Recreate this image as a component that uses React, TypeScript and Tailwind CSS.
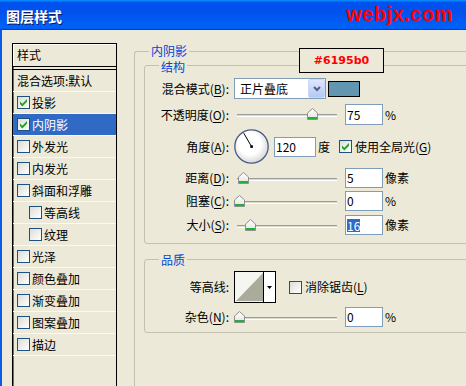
import React from "react";

function Check({ checked }: { checked?: boolean }) {
  return (
    <span className="flex w-[13px] h-[13px] shrink-0 items-center justify-center border border-[#1C5180] bg-linear-to-br from-[#DCDCD7] to-white">
      {checked ? (
        <svg width="11" height="11" viewBox="0 0 11 11" className="block">
          <path d="M2 4.4 L4.3 6.7 L9 2 V4.7 L4.3 9.4 L2 7.1 Z" fill="#21A121" />
        </svg>
      ) : null}
    </span>
  );
}

function Legend({ text, up }: { text: string; up: "6" | "7" | "8" }) {
  const mt = up === "6" ? "-mt-[6px]" : up === "8" ? "-mt-[8px]" : "-mt-[7px]";
  return (
    <div className={mt + " ml-[14px] w-fit px-[2px] bg-[#ECE9D8] text-[#0046D5] text-[12px] leading-[13px]"}>
      {text}
    </div>
  );
}

function Thumb() {
  return (
    <svg width="11" height="12" viewBox="0 0 11 12" className="block">
      <defs>
        <linearGradient id="thumbg" x1="0" y1="0" x2="0" y2="1">
          <stop offset="0" stopColor="#FFFFFF" />
          <stop offset="1" stopColor="#E3E3DC" />
        </linearGradient>
      </defs>
      <path d="M5.5 0.5 L10.5 5 V11.5 H0.5 V5 Z" fill="url(#thumbg)" stroke="#8E8F8F" />
      <rect x="1" y="9" width="9" height="2" fill="#21B03A" />
    </svg>
  );
}

function Slider({ x }: { x: number }) {
  return (
    <div className="relative w-[111px] h-full shrink-0">
      <div className="ml-[3px] mt-[10px] w-[100px] h-[3px] border-t border-[#9D9C99] bg-[#DAD9D0] border-b border-b-white" />
      <div className="absolute top-[4px]" style={{ left: x }}>
        <Thumb />
      </div>
    </div>
  );
}

function NumBox({ children, w = 38 }: { children: React.ReactNode; w?: number }) {
  return (
    <div
      className="h-full shrink-0 flex items-center border border-[#7F9DB9] bg-white pl-[1px]"
      style={{ width: w }}
    >
      {children}
    </div>
  );
}

function Label({ children }: { children: React.ReactNode }) {
  return <div className="w-[84px] mr-[5px] shrink-0 text-right whitespace-nowrap">{children}</div>;
}

const items: { label: string; checked?: boolean; active?: boolean; sub?: boolean }[] = [
  { label: "投影", checked: true },
  { label: "内阴影", checked: true, active: true },
  { label: "外发光" },
  { label: "内发光" },
  { label: "斜面和浮雕" },
  { label: "等高线", sub: true },
  { label: "纹理", sub: true },
  { label: "光泽" },
  { label: "颜色叠加" },
  { label: "渐变叠加" },
  { label: "图案叠加" },
  { label: "描边" },
];

export default function App() {
  return (
    <div className="relative w-[466px] h-[386px] overflow-hidden bg-[#ECE9D8] text-[12px] leading-[14px] text-black font-['Noto_Sans_CJK_SC','Liberation_Sans',sans-serif]">
      {/* Title bar */}
      <div className="h-[30px] flex items-center justify-between pl-[6px] pr-[13px] bg-[linear-gradient(180deg,#0997ff,#0053ee_8%,#0050ee_40%,#0062f5_88%,#0062f5_93%,#005bff_95%,#003dd7_96%,#003dd7)]">
        <div className="mt-[1px] text-white font-bold text-[14px] leading-[16px] [text-shadow:1px_1px_0_#0a1a6a]">
          图层样式
        </div>
        <div className="-mt-[2px] font-['Liberation_Sans',Arial,sans-serif] font-bold text-[20px] leading-[20px] tracking-[0.5px] text-[#FF0000]">
          webjx.com
        </div>
      </div>

      {/* Body */}
      <div className="flex items-start h-[356px] border-l-2 border-[#0A5AE8]">
        {/* Left list */}
        <div className="ml-[10px] mt-[13px] w-[105px] h-[400px] shrink-0 border border-black shadow-[inset_1px_0_0_#6f6f6f]">
          <div className="h-[23px] flex items-center pl-[4px] border-b border-black shadow-[inset_1px_1px_0_#ffffff]">
            样式
          </div>
          <div className="h-[3px] border-b border-black" />
          <div className="h-[22px] flex items-center pl-[4px] border-b border-[#FAFAF4]">混合选项:默认</div>
          {items.map((it) => (
            <div
              key={it.label}
              className={
                (it.active ? "bg-[#316AC5] text-white " : "") +
                (it.sub ? "pl-[16px] " : "pl-[4px] ") +
                "h-[22px] flex items-center gap-[2px] border-b border-[#FAFAF4]"
              }
            >
              <Check checked={it.checked} />
              <span>{it.label}</span>
            </div>
          ))}
        </div>

        {/* Right side */}
        <div className="ml-[17px] mt-[21px] w-[345px] h-[400px] shrink-0 border-l border-t border-[#C2C1B0] rounded-tl-[3px]">
          <Legend text="内阴影" up="8" />

          {/* 结构 */}
          <div className="ml-[9px] mt-[8px] w-[335px] border border-[#C2C1B0] rounded-[3px] pb-[8px]">
            <Legend text="结构" up="6" />

            <div className="flex items-center h-[21px] mt-[5px]">
              <Label>
                混合模式(<u className="underline-offset-2">B</u>):
              </Label>
              <div className="w-[92px] h-full shrink-0 flex items-center border border-[#7F9DB9] bg-white">
                <span className="flex-1 pl-[5px]">正片叠底</span>
                <div className="w-[17px] h-[19px] flex items-center justify-center rounded-[2px] border border-[#C9D8FC] bg-linear-to-b from-[#DDE6FC] to-[#B5C8F5]">
                  <svg width="8" height="6" viewBox="0 0 8 6" className="block">
                    <path d="M1 1 L4 4 L7 1" fill="none" stroke="#4D6185" strokeWidth="2" />
                  </svg>
                </div>
              </div>
              <div className="ml-[2px] w-[32px] h-[16px] border border-black bg-[#6195b0]" />
            </div>

            <div className="flex items-center h-[21px] mt-[5px]">
              <Label>
                不透明度(<u className="underline-offset-2">O</u>):
              </Label>
              <Slider x={73} />
              <NumBox>75</NumBox>
              <span className="ml-[2px]">%</span>
            </div>

            <div className="flex items-center h-[35px] mt-[4px]">
              <Label>
                角度(<u className="underline-offset-2">A</u>):
              </Label>
              <svg width="35" height="35" viewBox="0 0 35 35" className="block shrink-0">
                <defs>
                  <radialGradient id="dialg" cx="0.45" cy="0.42" r="0.6">
                    <stop offset="0.55" stopColor="#ffffff" />
                    <stop offset="1" stopColor="#d4d4d4" />
                  </radialGradient>
                </defs>
                <circle cx="17.5" cy="17.5" r="16.7" fill="url(#dialg)" stroke="#4A5B86" strokeWidth="1.3" />
                <line x1="17.5" y1="17.5" x2="9.8" y2="4.2" stroke="#000" strokeWidth="1" />
                <rect x="16.3" y="16.3" width="2.6" height="2.6" fill="#000" />
              </svg>
              <div className="ml-[5px] h-[20px] flex">
                <NumBox w={42}>120</NumBox>
              </div>
              <span className="ml-[2px]">度</span>
              <span className="ml-[9px]">
                <Check checked />
              </span>
              <span className="ml-[3px] whitespace-nowrap">
                使用全局光(<u className="underline-offset-2">G</u>)
              </span>
            </div>

            <div className="flex items-center h-[20px] mt-[4px]">
              <Label>
                距离(<u className="underline-offset-2">D</u>):
              </Label>
              <Slider x={4} />
              <NumBox>5</NumBox>
              <span className="ml-[2px]">像素</span>
            </div>

            <div className="flex items-center h-[20px] mt-[3px]">
              <Label>
                阻塞(<u className="underline-offset-2">C</u>):
              </Label>
              <Slider x={0} />
              <NumBox>0</NumBox>
              <span className="ml-[2px]">%</span>
            </div>

            <div className="flex items-center h-[20px] mt-[4px]">
              <Label>
                大小(<u className="underline-offset-2">S</u>):
              </Label>
              <Slider x={11} />
              <NumBox>
                <span className="bg-[#316AC5] text-white leading-[13px]">16</span>
              </NumBox>
              <span className="ml-[2px]">像素</span>
            </div>
          </div>

          {/* 品质 */}
          <div className="ml-[9px] mt-[15px] w-[335px] border border-[#C2C1B0] rounded-[3px] pb-[5px]">
            <Legend text="品质" up="7" />

            <div className="flex items-center h-[32px] mt-[5px]">
              <Label>等高线:</Label>
              <div className="flex w-[42px] h-full shrink-0 border border-black bg-white">
                <div className="w-[29px] h-full border-r border-black p-[1px] bg-[#F6F6F0]">
                  <svg width="27" height="28" viewBox="0 0 27 28" className="block">
                    <polygon points="0,28 27,0 27,28" fill="#ABAB9C" />
                  </svg>
                </div>
                <div className="flex-1 flex items-center justify-center">
                  <svg width="5" height="3" viewBox="0 0 5 3" className="block">
                    <polygon points="0,0 5,0 2.5,3" fill="#000" />
                  </svg>
                </div>
              </div>
              <span className="ml-[13px]">
                <Check />
              </span>
              <span className="ml-[3px] whitespace-nowrap">
                消除锯齿(<u className="underline-offset-2">L</u>)
              </span>
            </div>

            <div className="flex items-center h-[20px] mt-[4px]">
              <Label>
                杂色(<u className="underline-offset-2">N</u>):
              </Label>
              <Slider x={0} />
              <NumBox>0</NumBox>
              <span className="ml-[2px]">%</span>
            </div>
          </div>
        </div>
      </div>

      {/* annotation box */}
      <div className="absolute left-[299px] top-[48px] w-[85px] h-[25px] flex items-center justify-center border border-black bg-[#ECE9D8] font-['DejaVu_Sans',sans-serif] font-bold text-[11px] text-[#FF0000]">
        #6195b0
      </div>
    </div>
  );
}
